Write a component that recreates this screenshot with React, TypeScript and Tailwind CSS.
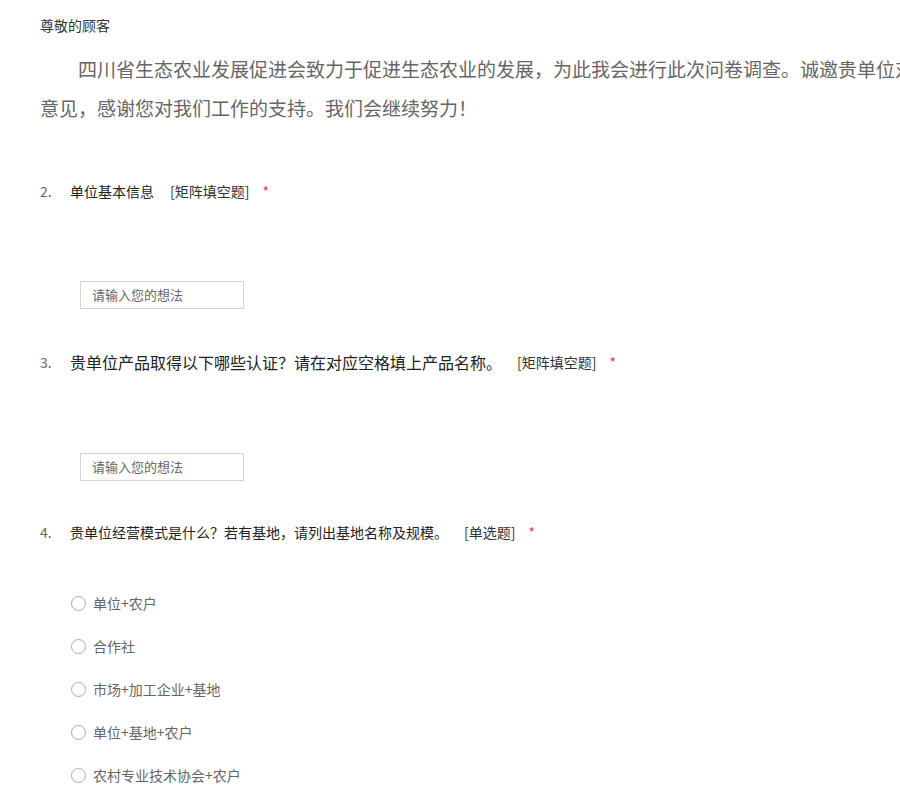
const font = { fontFamily: '"Microsoft YaHei", "Noto Sans CJK SC", "Noto Sans", sans-serif' };

function QuestionTitle({ num, text, tag, big }: { num: string; text: string; tag: string; big?: boolean }) {
  return (
    <div className="flex items-center h-[20px] pl-[40px] whitespace-nowrap">
      <span className="w-[30px] text-[14px] text-[#666]">{num}</span>
      <span className={big ? 'text-[16px] text-[#222]' : 'text-[14px] text-[#222]'}>{text}</span>
      <span className={big ? 'ml-[15px] text-[14px] text-[#333]' : 'ml-[16px] text-[14px] text-[#333]'}>{tag}</span>
      <span className="ml-[13px] text-[14px] text-[#f33]">*</span>
    </div>
  );
}

function TextBox() {
  return (
    <div className="ml-[80px] w-[164px] h-[28px] border border-[#d4d4d4] flex items-center pl-[11px] text-[13px] text-[#666]">
      请输入您的想法
    </div>
  );
}

const options = ['单位+农户', '合作社', '市场+加工企业+基地', '单位+基地+农户', '农村专业技术协会+农户'];

export default function App() {
  return (
    <div className="w-[900px] h-[800px] overflow-hidden bg-white" style={font}>
      <div className="pt-[15px] pl-[40px] text-[14px] leading-[20px] text-[#333]">尊敬的顾客</div>

      <div className="mt-[14px] pl-[40px] text-[19px] leading-[39px] text-[#666]">
        <div className="whitespace-nowrap indent-[38px]">
          四川省生态农业发展促进会致力于促进生态农业的发展，为此我会进行此次问卷调查。诚邀贵单位对我会工作提出宝贵
        </div>
        <div className="whitespace-nowrap">意见，感谢您对我们工作的支持。我们会继续努力！</div>
      </div>

      <div className="mt-[54px]">
        <QuestionTitle num="2." text="单位基本信息" tag="[矩阵填空题]" />
      </div>
      <div className="mt-[80px]">
        <TextBox />
      </div>

      <div className="mt-[43px]">
        <QuestionTitle num="3." text="贵单位产品取得以下哪些认证？请在对应空格填上产品名称。" tag="[矩阵填空题]" big />
      </div>
      <div className="mt-[81px]">
        <TextBox />
      </div>

      <div className="mt-[41px]">
        <QuestionTitle num="4." text="贵单位经营模式是什么？若有基地，请列出基地名称及规模。" tag="[单选题]" />
      </div>

      <div className="mt-[40px] flex flex-col">
        {options.map((o) => (
          <div key={o} className="h-[43px] flex items-center pl-[71px]">
            <span className="w-[15px] h-[15px] rounded-full border border-[#aaa] bg-white" />
            <span className="ml-[7px] text-[14px] text-[#666]">{o}</span>
          </div>
        ))}
      </div>
    </div>
  );
}
